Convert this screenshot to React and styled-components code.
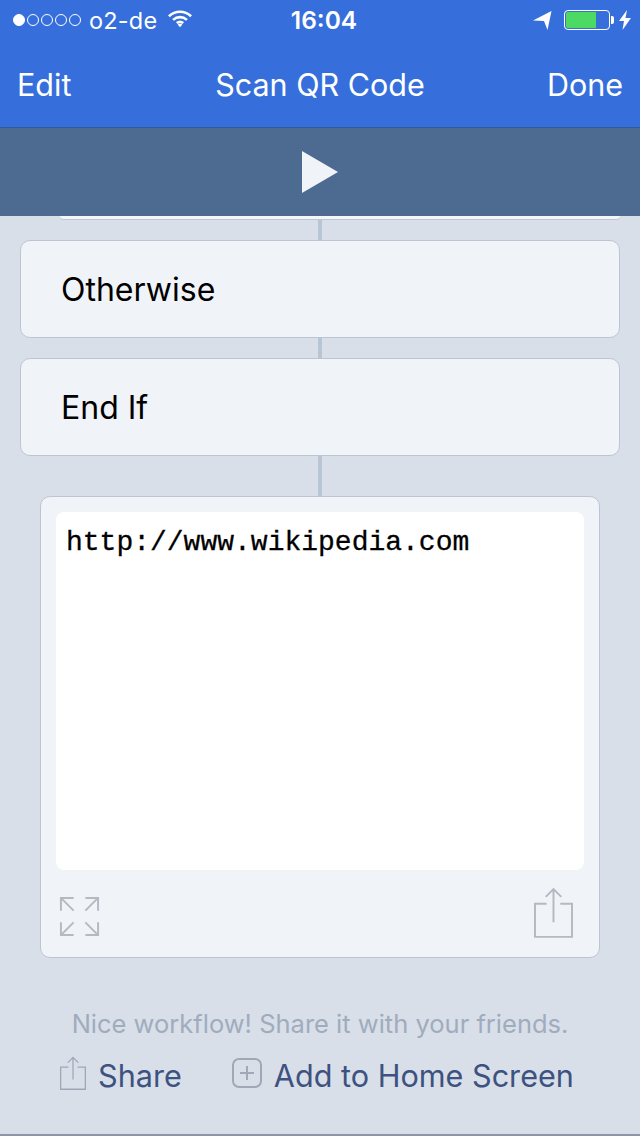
import styled, { createGlobalStyle } from "styled-components";

const GlobalStyle = createGlobalStyle`
  html, body {
    margin: 0;
    padding: 0;
    background: #d8dfe9;
  }
  * {
    box-sizing: border-box;
  }
`;

const Screen = styled.div`
  width: 640px;
  height: 1136px;
  overflow: hidden;
  display: flex;
  flex-direction: column;
  background: #d8dfe9;
  border-bottom: 2px solid #8c96a6;
  font-family: Inter, "Liberation Sans", sans-serif;
`;

const Header = styled.div`
  height: 128px;
  background: #366fdc;
  border-bottom: 1px solid #2f5a9f;
  color: #fff;
  display: flex;
  flex-direction: column;
`;

const StatusBar = styled.div`
  height: 40px;
  position: relative;
  display: flex;
  align-items: center;
  justify-content: space-between;
  padding: 0 9px 0 13px;
`;

const StatusGroup = styled.div`
  display: flex;
  align-items: center;
`;

const Dot = styled.span`
  width: 12px;
  height: 12px;
  border-radius: 50%;
  margin-right: 2px;
  border: 1px solid #fff;
  background: ${(p) => (p.$filled ? "#fff" : "transparent")};
`;

const Carrier = styled.span`
  font-size: 23.5px;
  margin-left: 6px;
  letter-spacing: 0.2px;
`;

const Clock = styled.span`
  position: absolute;
  left: 8px;
  right: 0;
  text-align: center;
  font-size: 24.5px;
  font-weight: 600;
`;

const Battery = styled.div`
  width: 46px;
  height: 20px;
  border: 1px solid #fff;
  border-radius: 4px;
  padding: 1px;
  margin-left: 12px;
  position: relative;
  &::after {
    content: "";
    position: absolute;
    right: -5px;
    top: 5px;
    width: 3px;
    height: 8px;
    background: #fff;
    border-radius: 0 2px 2px 0;
  }
`;

const BatteryLevel = styled.div`
  width: 30px;
  height: 100%;
  background: #4cd964;
  border-radius: 2px 0 0 2px;
`;

const NavBar = styled.div`
  flex: 1;
  position: relative;
  display: flex;
  align-items: center;
  justify-content: space-between;
  padding: 2px 17px 0;
  font-size: 30.5px;
`;

const NavTitle = styled.span`
  position: absolute;
  left: 0;
  right: 0;
  text-align: center;
`;

const RunBar = styled.div`
  height: 88px;
  background: #4d6a90;
  display: flex;
  align-items: center;
  justify-content: center;
`;

const Workflow = styled.div`
  flex: 1;
  display: flex;
  flex-direction: column;
  align-items: center;
`;

const CutOffAction = styled.div`
  align-self: stretch;
  height: 4px;
  margin: 0 20px 0 60px;
  background: #f4f6fa;
  border-bottom: 1px solid #bcc6d3;
  border-radius: 0 0 8px 8px;
`;

const Connector = styled.div`
  width: 4px;
  height: ${(p) => p.$height}px;
  background: #b7c5d6;
`;

const ActionCard = styled.div`
  width: 600px;
  height: 98px;
  padding-left: 40px;
  display: flex;
  align-items: center;
  background: #f0f3f8;
  border: 1px solid #bcc6d3;
  border-radius: 10px;
  font-size: 32px;
  color: #000;
`;

const ResultCard = styled.div`
  width: 560px;
  height: 462px;
  padding: 15px;
  display: flex;
  flex-direction: column;
  background: #f0f3f8;
  border: 1px solid #bcc6d3;
  border-radius: 10px;
`;

const ResultText = styled.div`
  height: 358px;
  padding: 13px 10px;
  background: #fff;
  border-radius: 8px;
  font-family: "Liberation Mono", "Courier New", monospace;
  font-size: 28px;
  line-height: 36px;
  color: #000;
  -webkit-text-stroke: 0.3px #000;
`;

const ResultTools = styled.div`
  flex: 1;
  display: flex;
  align-items: flex-end;
  justify-content: space-between;
  padding: 0 11px 4px 2px;
`;

const Hint = styled.div`
  margin-top: 50px;
  font-size: 25.5px;
  color: #a0acbe;
  text-align: center;
`;

const Footer = styled.div`
  margin-top: 17px;
  padding-right: 6px;
  display: flex;
  align-items: center;
  gap: 50px;
`;

const FooterAction = styled.div`
  display: flex;
  align-items: center;
  gap: 12px;
  font-size: 30.6px;
  color: #3d5280;
  svg {
    margin-bottom: 5px;
  }
`;

function ShareIcon({ width, height, color }) {
  return (
    <svg width={width} height={height} viewBox="0 0 40 52" fill="none" stroke={color} strokeWidth="2">
      <path d="M13 17H1v34h38V17H27" />
      <path d="M20 36V2M12 10l8-8 8 8" />
    </svg>
  );
}

function App() {
  return (
    <Screen>
      <GlobalStyle />
      <Header>
        <StatusBar>
          <StatusGroup>
            <Dot $filled />
            <Dot />
            <Dot />
            <Dot />
            <Dot />
            <Carrier>o2-de</Carrier>
            <svg width="24" height="19" viewBox="0 0 26 20" style={{ marginLeft: 11, marginBottom: 4 }} fill="none" stroke="#fff" strokeWidth="2.8">
              <path d="M1 7.5c7-6.5 17-6.5 24 0" />
              <path d="M5.5 11.5c4.5-4 10.5-4 15 0" />
              <path d="M9.5 15c2-1.6 5-1.6 7 0" />
              <path d="M13 19.5l-2.6-3c1.6-1 3.6-1 5.2 0z" fill="#fff" stroke="none" />
            </svg>
          </StatusGroup>
          <Clock>16:04</Clock>
          <StatusGroup>
            <svg width="19" height="20" viewBox="0 0 19 20">
              <path d="M0 10.5L18.5 1 14.5 20 11 11z" fill="#fff" />
            </svg>
            <Battery>
              <BatteryLevel />
            </Battery>
            <svg width="12" height="20" viewBox="0 0 12 20" style={{ marginLeft: 9 }}>
              <path d="M8 0L0 11h5l-1.5 9L12 8H6.5z" fill="#fff" />
            </svg>
          </StatusGroup>
        </StatusBar>
        <NavBar>
          <span>Edit</span>
          <NavTitle>Scan QR Code</NavTitle>
          <span>Done</span>
        </NavBar>
      </Header>
      <RunBar>
        <svg width="36" height="42" viewBox="0 0 36 42">
          <path d="M0 0L36 21 0 42z" fill="#f0f3f8" />
        </svg>
      </RunBar>
      <Workflow>
        <CutOffAction />
        <Connector $height={20} />
        <ActionCard>Otherwise</ActionCard>
        <Connector $height={20} />
        <ActionCard>End If</ActionCard>
        <Connector $height={40} />
        <ResultCard>
          <ResultText>http://www.wikipedia.com</ResultText>
          <ResultTools>
            <svg width="43" height="43" viewBox="0 0 44 44" fill="none" stroke="#b4b9c2" strokeWidth="2">
              <path d="M3 16V3h13M3 3l13 13" />
              <path d="M28 3h13v13M41 3L28 16" />
              <path d="M3 28v13h13M3 41l13-13" />
              <path d="M41 28v13H28M41 41L28 28" />
            </svg>
            <ShareIcon width={39} height={51} color="#b4b9c2" />
          </ResultTools>
        </ResultCard>
        <Hint>Nice workflow! Share it with your friends.</Hint>
        <Footer>
          <FooterAction>
            <ShareIcon width={26} height={34} color="#a0a8b8" />
            Share
          </FooterAction>
          <FooterAction>
            <svg width="30" height="30" viewBox="0 0 30 30" fill="none" stroke="#a0a8b8" strokeWidth="2">
              <rect x="1" y="1" width="28" height="28" rx="6" />
              <path d="M15 8v14M8 15h14" />
            </svg>
            Add to Home Screen
          </FooterAction>
        </Footer>
      </Workflow>
    </Screen>
  );
}

export default App;
